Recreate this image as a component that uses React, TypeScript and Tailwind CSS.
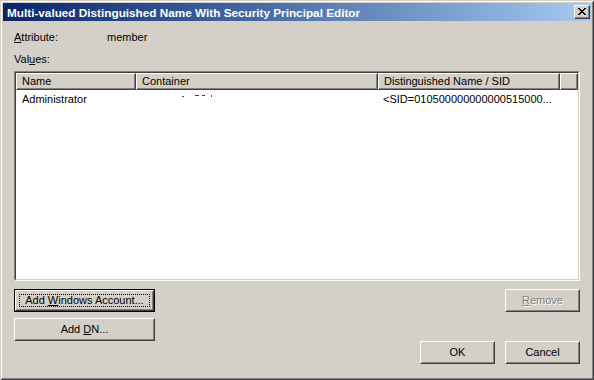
import React from "react";

const font = { fontFamily: '"Liberation Sans", Arial, sans-serif' };

function Btn({
  children,
  className = "",
  isDefault = false,
  disabled = false,
}: {
  children: React.ReactNode;
  className?: string;
  isDefault?: boolean;
  disabled?: boolean;
}) {
  const inner = (
    <div className="flex-1 flex items-center justify-center border border-t-white border-l-white border-r-[#404040] border-b-[#404040] bg-[#d4d0c8]">
      <div className="flex-1 self-stretch flex items-center justify-center border border-t-[#d4d0c8] border-l-[#d4d0c8] border-r-[#808080] border-b-[#808080]">
        {isDefault ? (
          <div className="flex-1 self-stretch m-[2px] flex items-center justify-center border border-dotted border-black">
            {children}
          </div>
        ) : (
          <span
            className={disabled ? "text-[#808080] [text-shadow:1px_1px_0_#fff]" : "text-black"}
          >
            {children}
          </span>
        )}
      </div>
    </div>
  );
  return (
    <div
      className={
        "flex text-[11px] leading-[13px] " +
        (isDefault ? "border border-black " : "") +
        className
      }
    >
      {inner}
    </div>
  );
}

export default function App() {
  return (
    <div
      className="w-[594px] h-[380px] bg-[#d4d0c8] p-[3px] flex flex-col text-black shadow-[inset_1px_1px_0_#d4d0c8,inset_-1px_-1px_0_#404040,inset_2px_2px_0_#ffffff,inset_-2px_-2px_0_#808080]"
      style={font}
    >
      {/* Title bar */}
      <div className="h-[18px] flex items-center justify-between bg-gradient-to-r from-[#0a246a] to-[#a6caf0] pl-[4px] pr-[1px]">
        <span className="text-white font-bold text-[11.75px] leading-[13px]">
          Multi-valued Distinguished Name With Security Principal Editor
        </span>
        <div className="w-[16px] h-[14px] bg-[#d4d0c8] flex border border-t-white border-l-white border-r-[#404040] border-b-[#404040]">
          <div className="flex-1 flex items-center justify-center border-r border-b border-r-[#808080] border-b-[#808080]">
            <svg width="8" height="7" viewBox="0 0 8 7">
              <path
                d="M0 0h2v1h-2zM6 0h2v1h-2zM1 1h2v1h-2zM5 1h2v1h-2zM2 2h4v1h-4zM3 3h2v1h-2zM2 4h4v1h-4zM1 5h2v1h-2zM5 5h2v1h-2zM0 6h2v1h-2zM6 6h2v1h-2z"
                fill="#000"
              />
            </svg>
          </div>
        </div>
      </div>

      {/* Body */}
      <div className="flex-1 flex flex-col px-[11px] text-[11px] leading-[13px]">
        <div className="flex mt-[10px] h-[13px]">
          <span className="w-[93px]">
            <span className="underline underline-offset-[1px]">A</span>ttribute:
          </span>
          <span>member</span>
        </div>
        <div className="mt-[9px] h-[13px]">
          Val<span className="underline underline-offset-[1px]">u</span>es:
        </div>

        {/* List view */}
        <div className="mt-[5px] h-[210px] flex border border-t-[#808080] border-l-[#808080] border-r-white border-b-white">
          <div className="flex-1 flex flex-col bg-white border border-t-[#404040] border-l-[#404040] border-r-[#d4d0c8] border-b-[#d4d0c8]">
            {/* header */}
            <div className="flex h-[17px] bg-[#d4d0c8]">
              {[
                { t: "Name", w: "w-[120px]" },
                { t: "Container", w: "w-[242px]" },
                { t: "Distinguished Name / SID", w: "w-[182px]" },
                { t: "", w: "flex-1" },
              ].map((c, i) => (
                <div
                  key={i}
                  className={
                    c.w +
                    " flex border-t border-l border-t-white border-l-white border-b border-r border-b-[#404040] border-r-[#404040]"
                  }
                >
                  <div className="flex-1 flex items-center pl-[5px] border-b border-r border-b-[#808080] border-r-[#808080]">
                    {c.t}
                  </div>
                </div>
              ))}
            </div>
            {/* row */}
            <div className="flex h-[16px] items-center mt-[1px]">
              <div className="w-[120px] pl-[6px]">Administrator</div>
              <div className="w-[242px] pl-[46px] flex items-start h-[10px] gap-[3px]">
                <span className="block w-[2px] h-[1px] bg-[#505050] mt-[2px]" />
                <span className="block w-[4px] h-[1px] bg-[#404040] mt-[1px] ml-[8px]" />
                <span className="block w-[3px] h-[1px] bg-[#404040] mt-[1px]" />
                <span className="block w-[1px] h-[2px] bg-[#505050] mt-[1px] ml-[3px]" />
              </div>
              <div className="w-[182px] pl-[5px] whitespace-nowrap">
                &lt;SID=010500000000000515000...
              </div>
            </div>
          </div>
        </div>

        {/* Buttons */}
        <div className="flex-1 flex justify-between mt-[8px] pb-[13px]">
          <div className="flex flex-col gap-[6px]">
            <Btn isDefault className="w-[141px] h-[23px]">
              <span>
                Add <span className="underline underline-offset-[1px]">W</span>indows Account...
              </span>
            </Btn>
            <Btn className="w-[141px] h-[23px]">
              <span>
                Add <span className="underline underline-offset-[1px]">D</span>N...
              </span>
            </Btn>
          </div>
          <div className="flex flex-col justify-between items-end">
            <Btn disabled className="w-[75px] h-[23px]">
              <span>
                <span className="underline underline-offset-[1px]">R</span>emove
              </span>
            </Btn>
            <div className="flex gap-[10px]">
              <Btn className="w-[75px] h-[23px]">OK</Btn>
              <Btn className="w-[75px] h-[23px]">Cancel</Btn>
            </div>
          </div>
        </div>
      </div>
    </div>
  );
}
